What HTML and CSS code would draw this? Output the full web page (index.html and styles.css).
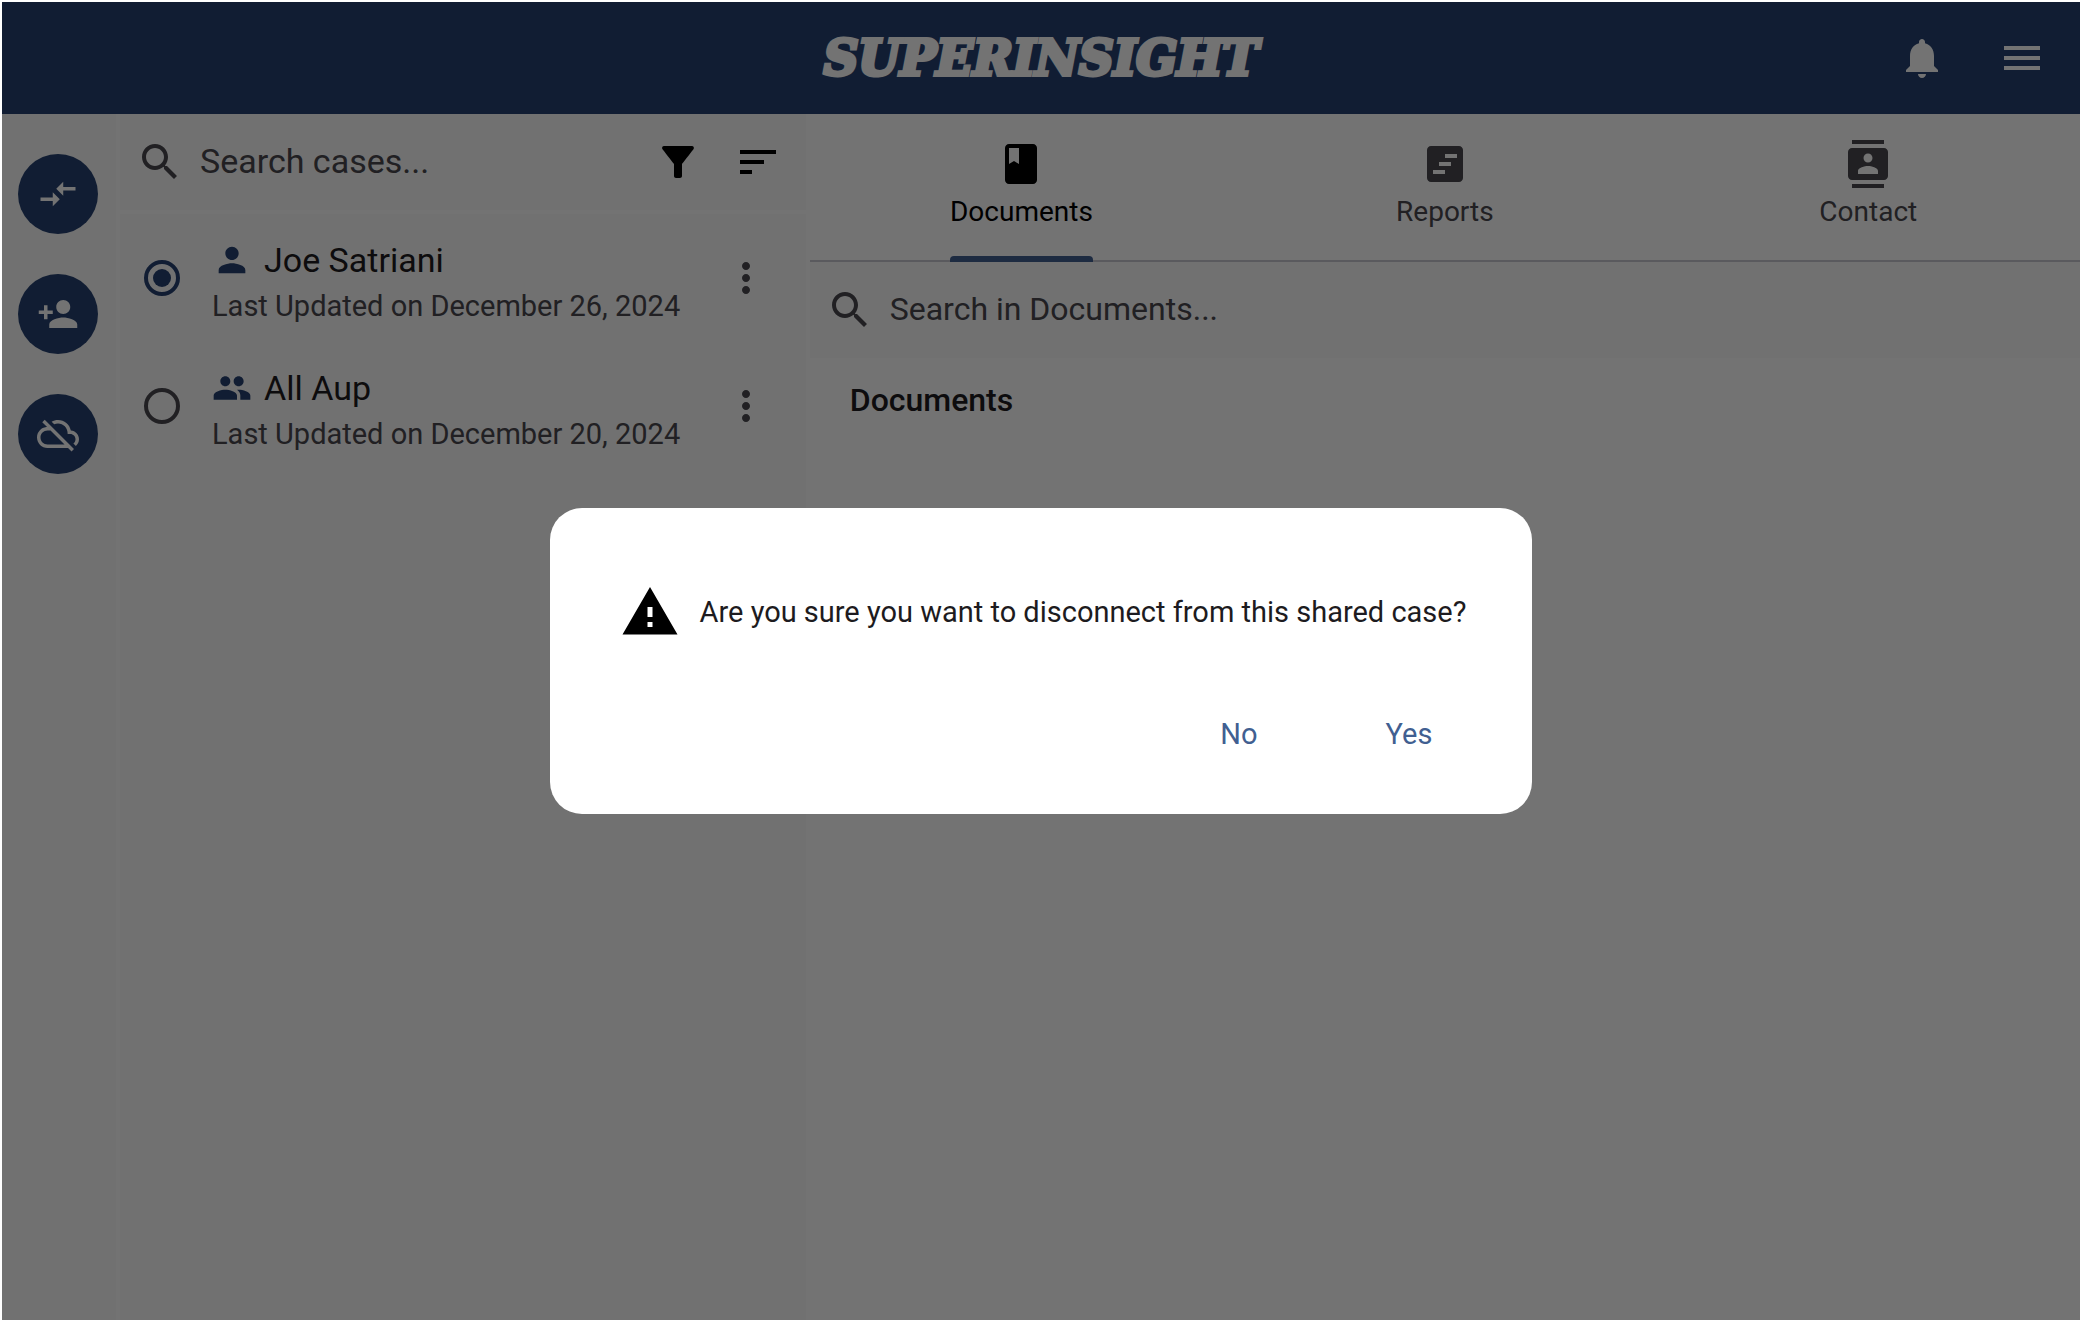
FILE: index.html
```html
<!DOCTYPE html>
<html lang="en">
<head>
<meta charset="utf-8">
<meta name="viewport" content="width=device-width, initial-scale=1">
<title>Superinsight</title>
<link rel="stylesheet" href="styles.css">
</head>
<body>
<div class="app">
  <header class="topbar">
    <h1 class="logo">SUPERINSIGHT</h1>
    <div class="topbar-actions">
      <button class="icon-button" type="button" aria-label="Notifications"><svg class="icon" viewBox="0 0 24 24"><path d="M12 22c1.1 0 2-.9 2-2h-4c0 1.1.89 2 2 2zm6-6v-5c0-3.07-1.64-5.64-4.5-6.32V4c0-.83-.67-1.5-1.5-1.5s-1.5.67-1.5 1.5v.68C7.63 5.36 6 7.92 6 11v5l-2 2v1h16v-1l-2-2z"/></svg></button>
      <button class="icon-button" type="button" aria-label="Menu"><svg class="icon" viewBox="0 0 24 24"><path d="M3 18h18v-2H3v2zm0-5h18v-2H3v2zm0-7v2h18V6H3z"/></svg></button>
    </div>
  </header>

  <div class="workspace">
    <nav class="rail" aria-label="Case actions">
      <button class="round-button" type="button" aria-label="Switch case"><svg class="icon icon-rail" viewBox="0 0 24 24"><path d="M9.01 14H2v2h7.01v3L13 15l-3.99-4v3zm5.98-1v-3H22V8h-7.01V5L11 9l3.99 4z"/></svg></button>
      <button class="round-button" type="button" aria-label="Add person"><svg class="icon icon-rail" viewBox="0 0 24 24"><path d="M15 12c2.21 0 4-1.79 4-4s-1.79-4-4-4-4 1.79-4 4 1.79 4 4 4zm-9-2V7H4v3H1v2h3v3h2v-3h3v-2H6zm9 4c-2.67 0-8 1.34-8 4v2h16v-2c0-2.66-5.33-4-8-4z"/></svg></button>
      <button class="round-button" type="button" aria-label="Disconnect shared case"><svg class="icon icon-rail" viewBox="0 0 24 24"><path d="M24 15c0-2.64-2.05-4.78-4.65-4.96C18.67 6.59 15.64 4 12 4c-1.33 0-2.57.36-3.65.97l1.49 1.49C10.51 6.17 11.23 6 12 6c3.04 0 5.5 2.46 5.5 5.5v.5H19c1.66 0 3 1.34 3 3 0 .99-.48 1.85-1.21 2.4l1.41 1.41c1.09-.92 1.8-2.27 1.8-3.81zM4.41 3.86L3 5.27l2.77 2.77h-.42C2.34 8.36 0 10.91 0 14c0 3.31 2.69 6 6 6h11.73l2 2 1.41-1.41L4.41 3.86zM6 18c-2.21 0-4-1.79-4-4s1.79-4 4-4h1.73l8 8H6z"/></svg></button>
    </nav>

    <section class="cases">
      <div class="search search-cases">
        <svg class="icon" viewBox="0 0 24 24"><path d="M15.5 14h-.79l-.28-.27C15.41 12.59 16 11.11 16 9.5 16 5.91 13.09 3 9.5 3S3 5.91 3 9.5 5.91 16 9.5 16c1.61 0 3.09-.59 4.23-1.57l.27.28v.79l5 4.99L20.49 19l-4.99-5zm-6 0C7.01 14 5 11.99 5 9.5S7.01 5 9.5 5 14 7.01 14 9.5 11.99 14 9.5 14z"/></svg>
        <input class="search-input" type="text" placeholder="Search cases..." aria-label="Search cases">
        <div class="search-actions">
          <button class="icon-button" type="button" aria-label="Filter"><svg class="icon" viewBox="0 0 24 24"><path d="M4.25 5.61C6.27 8.2 10 13 10 13v6c0 .55.45 1 1 1h2c.55 0 1-.45 1-1v-6s3.72-4.8 5.74-7.39c.51-.66.04-1.61-.79-1.61H5.04c-.83 0-1.3.95-.79 1.61z"/></svg></button>
          <button class="icon-button" type="button" aria-label="Sort"><svg class="icon" viewBox="0 0 24 24"><path d="M3 18h6v-2H3v2zM3 6v2h18V6H3zm0 7h12v-2H3v2z"/></svg></button>
        </div>
      </div>
      <ul class="case-list">
        <li class="case">
          <input class="radio" type="radio" name="case" id="case-joe" checked>
          <label class="case-text" for="case-joe">
            <span class="case-name"><svg class="icon icon-person" viewBox="0 0 24 24"><path d="M12 12c2.21 0 4-1.79 4-4s-1.79-4-4-4-4 1.79-4 4 1.79 4 4 4zm0 2c-2.67 0-8 1.34-8 4v2h16v-2c0-2.66-5.33-4-8-4z"/></svg>Joe Satriani</span>
            <span class="case-date">Last Updated on December 26, 2024</span>
          </label>
          <button class="icon-button more" type="button" aria-label="More options for Joe Satriani"><svg class="icon" viewBox="0 0 24 24"><path d="M12 8c1.1 0 2-.9 2-2s-.9-2-2-2-2 .9-2 2 .9 2 2 2zm0 2c-1.1 0-2 .9-2 2s.9 2 2 2 2-.9 2-2-.9-2-2-2zm0 6c-1.1 0-2 .9-2 2s.9 2 2 2 2-.9 2-2-.9-2-2-2z"/></svg></button>
        </li>
        <li class="case">
          <input class="radio" type="radio" name="case" id="case-all">
          <label class="case-text" for="case-all">
            <span class="case-name"><svg class="icon icon-person" viewBox="0 0 24 24"><path d="M16 11c1.66 0 2.99-1.34 2.99-3S17.66 5 16 5s-3 1.34-3 3 1.34 3 3 3zm-8 0c1.66 0 2.99-1.34 2.99-3S9.66 5 8 5 5 6.34 5 8s1.34 3 3 3zm0 2c-2.33 0-7 1.17-7 3.5V19h14v-2.5c0-2.33-4.67-3.5-7-3.5zm8 0c-.29 0-.62.02-.97.05 1.16.84 1.97 1.97 1.97 3.45V19h6v-2.5c0-2.33-4.67-3.5-7-3.5z"/></svg>All Aup</span>
            <span class="case-date">Last Updated on December 20, 2024</span>
          </label>
          <button class="icon-button more" type="button" aria-label="More options for All Aup"><svg class="icon" viewBox="0 0 24 24"><path d="M12 8c1.1 0 2-.9 2-2s-.9-2-2-2-2 .9-2 2 .9 2 2 2zm0 2c-1.1 0-2 .9-2 2s.9 2 2 2 2-.9 2-2-.9-2-2-2zm0 6c-1.1 0-2 .9-2 2s.9 2 2 2 2-.9 2-2-.9-2-2-2z"/></svg></button>
        </li>
      </ul>
    </section>

    <main class="detail">
      <div class="tabs" role="tablist">
        <button class="tab tab-active" type="button" role="tab" aria-selected="true"><svg class="icon" viewBox="0 0 24 24"><path d="M18 2H6c-1.1 0-2 .9-2 2v16c0 1.1.9 2 2 2h12c1.1 0 2-.9 2-2V4c0-1.1-.9-2-2-2zM6 4h5v8l-2.5-1.5L6 12V4z"/></svg><span class="tab-label">Documents</span></button>
        <button class="tab" type="button" role="tab" aria-selected="false"><svg class="icon" viewBox="0 0 24 24"><path d="M19 3H5c-1.1 0-2 .9-2 2v14c0 1.1.9 2 2 2h14c1.1 0 2-.9 2-2V5c0-1.1-.9-2-2-2zm-7 14H6v-2h6v2zm3-4H9v-2h6v2zm3-4h-6V7h6v2z"/></svg><span class="tab-label">Reports</span></button>
        <button class="tab" type="button" role="tab" aria-selected="false"><svg class="icon" viewBox="0 0 24 24"><path d="M20 0H4v2h16V0zM4 24h16v-2H4v2zM20 4H4c-1.1 0-2 .9-2 2v12c0 1.1.9 2 2 2h16c1.1 0 2-.9 2-2V6c0-1.1-.9-2-2-2zm-8 2.75c1.24 0 2.25 1.01 2.25 2.25s-1.01 2.25-2.25 2.25S9.75 10.24 9.75 9 10.76 6.75 12 6.75zM17 17H7v-1.5c0-1.67 3.33-2.5 5-2.5s5 .83 5 2.5V17z"/></svg><span class="tab-label">Contact</span></button>
      </div>
      <div class="search search-documents">
        <svg class="icon" viewBox="0 0 24 24"><path d="M15.5 14h-.79l-.28-.27C15.41 12.59 16 11.11 16 9.5 16 5.91 13.09 3 9.5 3S3 5.91 3 9.5 5.91 16 9.5 16c1.61 0 3.09-.59 4.23-1.57l.27.28v.79l5 4.99L20.49 19l-4.99-5zm-6 0C7.01 14 5 11.99 5 9.5S7.01 5 9.5 5 14 7.01 14 9.5 11.99 14 9.5 14z"/></svg>
        <input class="search-input" type="text" placeholder="Search in Documents..." aria-label="Search in Documents">
      </div>
      <h2 class="section-title">Documents</h2>
    </main>
  </div>

  <div class="scrim">
    <div class="dialog" role="alertdialog" aria-modal="true" aria-labelledby="dialog-message">
      <div class="dialog-body">
        <svg class="icon icon-warning" viewBox="0 0 24 24"><path d="M1 21h22L12 2 1 21zm12-3h-2v-2h2v2zm0-4h-2v-4h2v4z"/></svg>
        <p class="dialog-message" id="dialog-message">Are you sure you want to disconnect from this shared case?</p>
      </div>
      <div class="dialog-actions">
        <button class="text-button" type="button">No</button>
        <button class="text-button" type="button">Yes</button>
      </div>
    </div>
  </div>
</div>
</body>
</html>
```
FILE: styles.css
```css
:root {
  --navy: #264171;
  --primary: #415f91;
  --surface: #fafafa;
  --text: #1d1b20;
  --muted: #49484e;
}

* {
  box-sizing: border-box;
}

body {
  margin: 0;
  padding: 2px;
  background: #fff;
  color: var(--text);
  font-family: Roboto, "Liberation Sans", sans-serif;
  font-size: 29px;
  line-height: 40px;
}

button {
  margin: 0;
  padding: 0;
  border: 0;
  background: none;
  color: inherit;
  font: inherit;
  cursor: pointer;
}

.icon {
  display: block;
  flex: none;
  width: 48px;
  height: 48px;
  fill: currentColor;
}

.app {
  position: relative;
  display: flex;
  flex-direction: column;
  min-height: calc(100vh - 4px);
}

/* Top bar */
.topbar {
  display: grid;
  grid-template-columns: 1fr auto 1fr;
  align-items: center;
  height: 112px;
  padding: 0 34px;
  background: var(--navy);
  color: #fff;
}

.logo {
  grid-column: 2;
  margin: 0;
  font: italic 700 48px/64px "DejaVu Serif", serif;
  -webkit-text-stroke: 4px currentColor;
}

.topbar-actions {
  display: flex;
  justify-content: flex-end;
  gap: 52px;
}

/* Columns */
.workspace {
  flex: 1;
  display: grid;
  grid-template-columns: 114px 33% 1fr;
  column-gap: 4px;
}

.rail {
  display: flex;
  flex-direction: column;
  gap: 40px;
  padding: 40px 16px;
  background: var(--surface);
}

.round-button {
  display: grid;
  place-items: center;
  width: 80px;
  height: 80px;
  border-radius: 50%;
  background: var(--navy);
  color: #fff;
}

.icon-rail {
  width: 42px;
  height: 42px;
}

.cases {
  background: var(--surface);
}

/* Search rows */
.search {
  display: flex;
  align-items: center;
  gap: 16px;
  height: 96px;
  padding: 0 24px 0 16px;
  color: var(--muted);
  font-size: 32px;
}

.search-cases {
  font-size: 34px;
}

.search-documents {
  background: var(--surface);
}

.search-input {
  flex: 1;
  min-width: 0;
  padding: 0 0 3px;
  border: 0;
  outline: 0;
  background: none;
  color: var(--text);
  font: inherit;
}

.search-input::placeholder {
  color: var(--muted);
  opacity: 1;
}

.search-actions {
  display: flex;
  gap: 32px;
  color: #000;
}

/* Case list */
.case-list {
  margin: 0;
  padding: 0;
  border-top: 4px solid #fff;
  list-style: none;
}

.case {
  display: flex;
  align-items: center;
  height: 128px;
  padding: 0 36px 0 24px;
}

.radio {
  appearance: none;
  display: grid;
  place-items: center;
  flex: none;
  width: 36px;
  height: 36px;
  margin: 0 32px 0 0;
  border: 4px solid var(--muted);
  border-radius: 50%;
}

.radio:checked {
  border-color: var(--navy);
}

.radio:checked::before {
  content: "";
  width: 18px;
  height: 18px;
  border-radius: 50%;
  background: var(--navy);
}

.case-text {
  flex: 1;
  padding-top: 10px;
}

.case-name {
  display: flex;
  align-items: center;
  gap: 12px;
  margin-bottom: 6px;
  font-size: 34px;
}

.icon-person {
  width: 40px;
  height: 40px;
  color: var(--navy);
}

.case-date {
  display: block;
  color: var(--muted);
}

.more {
  color: var(--muted);
}

/* Detail pane */
.tabs {
  display: grid;
  grid-template-columns: repeat(3, 1fr);
  height: 148px;
  box-shadow: inset 0 -2px #c8c8d0;
}

.tab {
  display: flex;
  flex-direction: column;
  align-items: center;
  gap: 4px;
  padding-top: 26px;
  color: var(--muted);
  font-size: 28px;
}

.tab-label {
  flex: 1;
}

.tab-active {
  color: #000;
}

.tab-active .tab-label {
  display: flex;
  flex-direction: column;
  justify-content: space-between;
}

.tab-active .tab-label::after {
  content: "";
  height: 6px;
  border-radius: 4px 4px 0 0;
  background: var(--primary);
}

.section-title {
  margin: 0;
  padding: 22px 40px;
  font-size: 32px;
  font-weight: 500;
}

/* Dialog */
.scrim {
  position: absolute;
  inset: 0;
  display: grid;
  place-items: center;
  background: rgba(0, 0, 0, 0.55);
}

.dialog {
  max-width: 100%;
  padding: 74px 66px 40px 70px;
  border-radius: 32px;
  background: #fff;
}

.dialog-body {
  display: flex;
  align-items: center;
  gap: 20px;
  min-height: 60px;
}

.icon-warning {
  width: 60px;
  height: 60px;
  color: #000;
}

.dialog-message {
  margin: 0;
}

.dialog-actions {
  display: flex;
  justify-content: flex-end;
  gap: 80px;
  margin-top: 52px;
  padding-right: 10px;
}

.text-button {
  height: 80px;
  padding: 0 24px;
  color: var(--primary);
}
```
